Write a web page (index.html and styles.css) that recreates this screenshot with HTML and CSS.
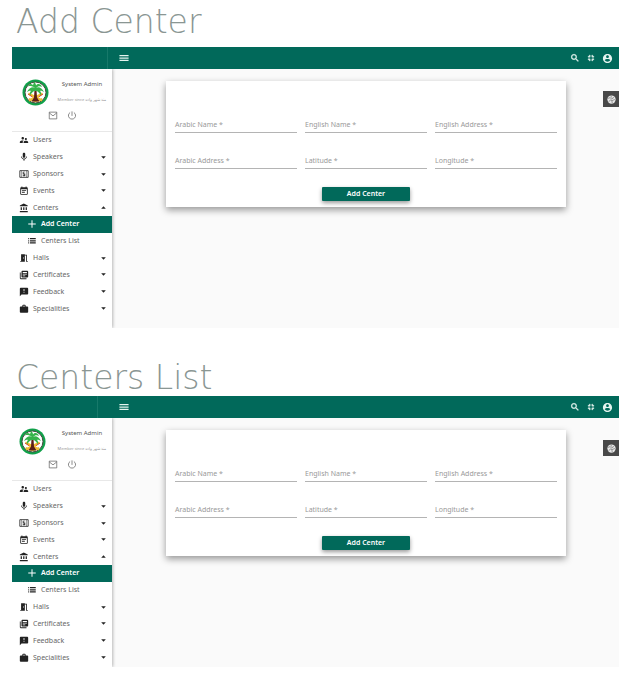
FILE: index.html
```
<!DOCTYPE html>
<html lang="en">
<head>
<meta charset="utf-8">
<title>Centers</title>
<link rel="stylesheet" href="styles.css">
</head>
<body>
<svg class="defs" aria-hidden="true">
  <symbol id="menu" viewBox="0 0 24 24"><path d="M1 19h22v-3H1v3zm0-5.500h22v-3H1v3zM1 5v3h22V5H1z"/></symbol>
  <symbol id="search" viewBox="0 0 24 24"><path d="M15.5 14h-.79l-.28-.27A6.47 6.47 0 0 0 16 9.5 6.5 6.5 0 1 0 9.5 16c1.61 0 3.09-.59 4.23-1.57l.27.28v.79l5 4.99L20.49 19l-4.99-5zm-6 0C7.01 14 5 11.99 5 9.5S7.01 5 9.5 5 14 7.01 14 9.5 11.99 14 9.5 14z" stroke="currentColor"/></symbol>
  <symbol id="shrink" viewBox="0 0 24 24"><path d="M5 16h3v3h2v-5H5v2zm3-8H5v2h5V5H8v3zm6 11h2v-3h3v-2h-5v5zm2-11V5h-2v5h5V8h-3z" stroke="currentColor"/></symbol>
  <symbol id="account" viewBox="0 0 24 24"><path d="M12 2C6.480 2 2 6.480 2 12s4.480 10 10 10 10-4.480 10-10S17.520 2 12 2zm0 3c1.660 0 3 1.340 3 3s-1.340 3-3 3-3-1.340-3-3 1.340-3 3-3zm0 14.200c-2.500 0-4.710-1.280-6-3.220.03-1.990 4-3.080 6-3.080 1.990 0 5.970 1.090 6 3.080-1.290 1.940-3.500 3.220-6 3.220z"/></symbol>
  <symbol id="mail" viewBox="0 0 24 24"><path d="M2 3h20v18H2zM2 5l10 8 10-8" fill="none" stroke="currentColor" stroke-width="2"/></symbol>
  <symbol id="power" viewBox="0 0 24 24"><path d="M12 1v12M7 4a9.500 9.500 0 1 0 10 0" fill="none" stroke="currentColor" stroke-width="2"/></symbol>
  <symbol id="users" viewBox="0 0 24 24"><path d="M16.500 12c1.380 0 2.490-1.120 2.490-2.500S17.880 7 16.500 7 14 8.120 14 9.500s1.120 2.500 2.500 2.500zM9 11c1.660 0 2.990-1.340 2.990-3S10.660 5 9 5 6 6.340 6 8s1.340 3 3 3zm7.500 3c-1.830 0-5.500.92-5.500 2.750V19h11v-2.250c0-1.830-3.670-2.750-5.500-2.750zM9 13c-2.330 0-7 1.170-7 3.500V19h7v-2.250c0-.85.33-2.340 2.370-3.470C10.500 13.100 9.660 13 9 13z"/></symbol>
  <symbol id="mic" viewBox="0 0 24 24"><path d="M12 14c1.660 0 2.990-1.340 2.990-3L15 5c0-1.660-1.340-3-3-3S9 3.340 9 5v6c0 1.660 1.340 3 3 3zm5.300-3c0 3-2.540 5.100-5.300 5.100S6.700 14 6.700 11H5c0 3.410 2.720 6.230 6 6.720V21h2v-3.280c3.280-.48 6-3.300 6-6.720h-1.700z"/></symbol>
  <symbol id="money" viewBox="0 0 24 24"><path d="M2 4h20v16H2z" fill="none" stroke="currentColor" stroke-width="2"/><path d="M5 4h1v16H5zM18 4h1v16h-1zM15 8h-4v3h4v6h-2v1h-2v-1H9v-2h4v-2H9V7h2V6h2v1h2z"/></symbol>
  <symbol id="event" viewBox="0 0 24 24"><path d="M17 10H7v2h10v-2zm2-7h-1V1h-2v2H8V1H6v2H5c-1.110 0-1.990.9-1.990 2L3 19c0 1.100.89 2 2 2h14c1.100 0 2-.9 2-2V5c0-1.100-.9-2-2-2zm0 16H5V8h14v11zm-5-5H7v2h7v-2z"/></symbol>
  <symbol id="bank" viewBox="0 0 24 24"><path d="M4 10v7h3v-7H4zm6 0v7h3v-7h-3zM2 22h19v-3H2v3zm14-12v7h3v-7h-3zM11.500 1L2 6v2h19V6l-9.500-5z"/></symbol>
  <symbol id="plus" viewBox="0 0 24 24"><path d="M21 13.200h-7.800V21h-2.400v-7.800H3v-2.400h7.800V3h2.400v7.800H21v2.400z"/></symbol>
  <symbol id="list" viewBox="0 0 24 24"><path d="M3 5h2v3H3zm0 5h2v3H3zm0 5h2v3H3zM7 5h14v3H7zm0 5h14v3H7zm0 5h14v3H7z"/></symbol>
  <symbol id="door" viewBox="0 0 24 24"><path d="M14 6v15H3v-2h2V3h9v1h5v15h2v2h-4V6h-3zm-4 5v2h2v-2h-2z"/></symbol>
  <symbol id="books" viewBox="0 0 24 24"><path d="M4 6H2v14c0 1.100.9 2 2 2h14v-2H4V6zm16-4H8c-1.100 0-2 .9-2 2v12c0 1.100.9 2 2 2h12c1.100 0 2-.9 2-2V4c0-1.100-.9-2-2-2zm-1 9H9V9h10v2zm-4 4H9v-2h6v2zm4-8H9V5h10v2z"/></symbol>
  <symbol id="feedback" viewBox="0 0 24 24"><path d="M20 2H4c-1.100 0-1.990.9-1.990 2L2 22l4-4h14c1.100 0 2-.9 2-2V4c0-1.100-.9-2-2-2zm-7 12h-2v-2h2v2zm0-4h-2V5h2v5z"/></symbol>
  <symbol id="work" viewBox="0 0 24 24"><path d="M20 6h-4V4c0-1.110-.89-2-2-2h-4c-1.110 0-2 .89-2 2v2H4c-1.110 0-2 .89-2 2v11c0 1.110.89 2 2 2h16c1.110 0 2-.89 2-2V8c0-1.110-.89-2-2-2zm-6 0h-4V4h4v2z"/></symbol>
  <symbol id="down" viewBox="0 0 24 24"><path d="M1 6h22L12 18z"/></symbol>
  <symbol id="up" viewBox="0 0 24 24"><path d="M1 18h22L12 6z"/></symbol>
  <symbol id="globe" viewBox="0 0 24 24"><circle cx="12" cy="12" r="11" fill="#e8e8e8"/><path d="M2 9l7-2 3 4 7-5M5 18l4-5 4 2 8-3M10 2l3 5M13 15l1 7" fill="none" stroke="#777" stroke-width="2"/></symbol>
  <symbol id="emblem" viewBox="0 0 54 54">
    <circle cx="27" cy="27" r="26" fill="#10a04a"/>
    <circle cx="27" cy="27" r="21" fill="#fff" stroke="#4a4a40" stroke-width="2"/>
    <path d="M13 29l27 14M41 29L14 43" stroke="#f2c230" stroke-width="4"/>
    <path d="M12 30l9 6M42 30l-9 6" stroke="#d8432e" stroke-width="2"/>
    <path d="M14 39q13 12 26 0" fill="none" stroke="#e9bd3c" stroke-width="3"/>
    <path d="M25 22h4l1 15 5 8H19l5-8z" fill="#5c1f17"/>
    <path d="M27 18C22 14 14 17 10 26c4-2 6-3 8-2-2 2-3 5-2 9 3-5 6-8 9-9h4c3 1 6 4 9 9 1-4 0-7-2-9 2-1 4 0 8 2-4-9-12-12-16-8 4-4 8-4 12-2-2-6-8-8-12-3 0-4-2-6-5-7 1 2 0 4-1 6-4-4-9-2-10 3 3-2 8-1 15 3z" fill="#35b34a"/>
  </symbol>
</svg>

<main>
  <section>
    <h1>Add Center</h1>
    <div class="app">
      <header class="topbar">
        <div class="brand"></div>
        <button class="icon-btn" aria-label="Menu"><svg><use href="#menu"/></svg></button>
        <div class="tools">
          <button class="icon-btn" aria-label="Search"><svg><use href="#search"/></svg></button>
          <button class="icon-btn" aria-label="Exit full screen"><svg><use href="#shrink"/></svg></button>
          <button class="icon-btn" aria-label="Account"><svg><use href="#account"/></svg></button>
        </div>
      </header>
      <div class="body">
        <aside class="sidebar">
          <div class="profile">
            <svg class="avatar"><use href="#emblem"/></svg>
            <div class="who">
              <strong>System Admin</strong>
              <small>Member since <bdi>منذ شهر واحد</bdi></small>
            </div>
            <div class="quick">
              <button class="icon-btn" aria-label="Messages"><svg><use href="#mail"/></svg></button>
              <button class="icon-btn" aria-label="Log out"><svg><use href="#power"/></svg></button>
            </div>
          </div>
          <nav class="menu">
            <a href="#"><svg><use href="#users"/></svg><span>Users</span></a>
            <a href="#"><svg><use href="#mic"/></svg><span>Speakers</span><svg class="caret"><use href="#down"/></svg></a>
            <a href="#"><svg><use href="#money"/></svg><span>Sponsors</span><svg class="caret"><use href="#down"/></svg></a>
            <a href="#"><svg><use href="#event"/></svg><span>Events</span><svg class="caret"><use href="#down"/></svg></a>
            <a href="#"><svg><use href="#bank"/></svg><span>Centers</span><svg class="caret"><use href="#up"/></svg></a>
            <a href="#" class="sub active"><svg><use href="#plus"/></svg><span>Add Center</span></a>
            <a href="#" class="sub"><svg><use href="#list"/></svg><span>Centers List</span></a>
            <a href="#"><svg><use href="#door"/></svg><span>Halls</span><svg class="caret"><use href="#down"/></svg></a>
            <a href="#"><svg><use href="#books"/></svg><span>Certificates</span><svg class="caret"><use href="#down"/></svg></a>
            <a href="#"><svg><use href="#feedback"/></svg><span>Feedback</span><svg class="caret"><use href="#down"/></svg></a>
            <a href="#"><svg><use href="#work"/></svg><span>Specialities</span><svg class="caret"><use href="#down"/></svg></a>
          </nav>
        </aside>
        <div class="content">
          <form class="card">
            <div class="fields">
              <div class="field"><label for="a1">Arabic Name *</label><input id="a1" type="text"></div>
              <div class="field"><label for="a2">English Name *</label><input id="a2" type="text"></div>
              <div class="field"><label for="a3">English Address *</label><input id="a3" type="text"></div>
              <div class="field"><label for="a4">Arabic Address *</label><input id="a4" type="text"></div>
              <div class="field"><label for="a5">Latitude *</label><input id="a5" type="text"></div>
              <div class="field"><label for="a6">Longitude *</label><input id="a6" type="text"></div>
            </div>
            <button class="submit" type="button">Add Center</button>
          </form>
          <button class="settings" aria-label="Theme"><svg><use href="#globe"/></svg></button>
        </div>
      </div>
    </div>
  </section>

  <section class="compact">
    <h1>Centers List</h1>
    <div class="app">
      <header class="topbar">
        <div class="brand"></div>
        <button class="icon-btn" aria-label="Menu"><svg><use href="#menu"/></svg></button>
        <div class="tools">
          <button class="icon-btn" aria-label="Search"><svg><use href="#search"/></svg></button>
          <button class="icon-btn" aria-label="Exit full screen"><svg><use href="#shrink"/></svg></button>
          <button class="icon-btn" aria-label="Account"><svg><use href="#account"/></svg></button>
        </div>
      </header>
      <div class="body">
        <aside class="sidebar">
          <div class="profile">
            <svg class="avatar"><use href="#emblem"/></svg>
            <div class="who">
              <strong>System Admin</strong>
              <small>Member since <bdi>منذ شهر واحد</bdi></small>
            </div>
            <div class="quick">
              <button class="icon-btn" aria-label="Messages"><svg><use href="#mail"/></svg></button>
              <button class="icon-btn" aria-label="Log out"><svg><use href="#power"/></svg></button>
            </div>
          </div>
          <nav class="menu">
            <a href="#"><svg><use href="#users"/></svg><span>Users</span></a>
            <a href="#"><svg><use href="#mic"/></svg><span>Speakers</span><svg class="caret"><use href="#down"/></svg></a>
            <a href="#"><svg><use href="#money"/></svg><span>Sponsors</span><svg class="caret"><use href="#down"/></svg></a>
            <a href="#"><svg><use href="#event"/></svg><span>Events</span><svg class="caret"><use href="#down"/></svg></a>
            <a href="#"><svg><use href="#bank"/></svg><span>Centers</span><svg class="caret"><use href="#up"/></svg></a>
            <a href="#" class="sub active"><svg><use href="#plus"/></svg><span>Add Center</span></a>
            <a href="#" class="sub"><svg><use href="#list"/></svg><span>Centers List</span></a>
            <a href="#"><svg><use href="#door"/></svg><span>Halls</span><svg class="caret"><use href="#down"/></svg></a>
            <a href="#"><svg><use href="#books"/></svg><span>Certificates</span><svg class="caret"><use href="#down"/></svg></a>
            <a href="#"><svg><use href="#feedback"/></svg><span>Feedback</span><svg class="caret"><use href="#down"/></svg></a>
            <a href="#"><svg><use href="#work"/></svg><span>Specialities</span><svg class="caret"><use href="#down"/></svg></a>
          </nav>
        </aside>
        <div class="content">
          <form class="card">
            <div class="fields">
              <div class="field"><label for="b1">Arabic Name *</label><input id="b1" type="text"></div>
              <div class="field"><label for="b2">English Name *</label><input id="b2" type="text"></div>
              <div class="field"><label for="b3">English Address *</label><input id="b3" type="text"></div>
              <div class="field"><label for="b4">Arabic Address *</label><input id="b4" type="text"></div>
              <div class="field"><label for="b5">Latitude *</label><input id="b5" type="text"></div>
              <div class="field"><label for="b6">Longitude *</label><input id="b6" type="text"></div>
            </div>
            <button class="submit" type="button">Add Center</button>
          </form>
          <button class="settings" aria-label="Theme"><svg><use href="#globe"/></svg></button>
        </div>
      </div>
    </div>
  </section>
</main>
</body>
</html>
```

FILE: styles.css
```
* { box-sizing: border-box; }

body {
  margin: 0;
  background: #fff;
  color: #666;
  font: 7px/10px "Noto Sans", "Open Sans", sans-serif;
}

.defs { position: absolute; width: 0; height: 0; }
svg { display: block; fill: currentColor; flex: none; }
button { padding: 0; border: 0; background: none; color: inherit; font: inherit; }

main {
  display: grid;
  gap: 28px;
  padding: 0 18px 10px 12px;
}

h1 {
  margin: 0;
  padding: 4px 4px 7px;
  color: #8a9693;
  font: 200 33px/36px "DejaVu Sans", sans-serif;
}

.compact h1 { padding-bottom: 0; }

.topbar {
  display: flex;
  align-items: center;
  height: 22px;
  padding-right: 6px;
  background: #01695a;
  color: #e4f4ef;
}

.brand {
  width: 96px;
  height: 100%;
  margin-right: 11px;
  border-right: 1px solid #17796a;
}

.compact .brand { width: 86px; margin-right: 21px; }
.topbar svg { width: 10px; height: 10px; }
.topbar .tools button:last-child svg { width: 11px; height: 11px; }
.tools { display: flex; align-items: center; gap: 6px; margin-left: auto; }

.body { display: flex; }

.sidebar {
  position: relative;
  width: 100px;
  padding-bottom: 11px;
  background: #fff;
  box-shadow: 1px 0 3px #0004;
  clip-path: inset(0 -5px 0 0);
}

.compact .sidebar { padding-bottom: 1px; }

.profile {
  display: grid;
  grid-template-columns: 27px 1fr;
  grid-template-rows: 27px 18px;
  column-gap: 7px;
  height: 63px;
  padding: 10px 4px 0 10px;
  border-bottom: 1px solid #e8e8e8;
}

.compact .profile { padding-left: 7px; column-gap: 10px; }
.avatar { width: 27px; height: 27px; }
.who { display: grid; gap: 6px; align-content: start; justify-items: center; font-size: 6px; white-space: nowrap; }
.who strong { font-weight: 400; color: #555; }
.who small { font-size: 4px; color: #999; }
.quick { grid-column: 1 / 3; display: flex; gap: 9px; align-items: center; padding-left: 26px; }
.compact .quick { padding-left: 29px; }
.quick svg { width: 10px; height: 9px; }

.menu {
  display: grid;
  grid-auto-rows: 1fr;
  height: 185px;
}

.menu a {
  display: flex;
  align-items: center;
  gap: 4px;
  padding: 0 6px 0 7px;
  color: #666;
  text-decoration: none;
}

.menu svg { width: 10px; height: 10px; color: #222; }
.menu .caret { width: 5px; height: 5px; margin-left: auto; }
.menu .sub { padding-left: 15px; }
.menu .active { background: #01695a; color: #fff; font-weight: 600; }
.menu .active svg { color: #fff; }

.content {
  display: flex;
  flex: 1;
  align-items: flex-start;
  padding-top: 12px;
  padding-left: 54px;
  background: #fafafa;
}

.card {
  flex: 1;
  height: 126px;
  padding: 38px 9px 0;
  background: #fff;
  box-shadow: 0 3px 7px #0006;
}

.fields {
  display: grid;
  grid-template-columns: repeat(3, 1fr);
  gap: 22px 8px;
  margin-bottom: 18px;
}

.field { position: relative; }

.field label {
  position: absolute;
  top: 1px;
  left: 0;
  color: #999;
}

.field input {
  display: block;
  width: 100%;
  height: 14px;
  padding: 0;
  border: 0;
  border-bottom: 1px solid #b4b4b4;
  background: none;
  font: inherit;
  outline: 0;
}

.submit {
  display: block;
  width: 88px;
  height: 14px;
  margin: 0 auto;
  border-radius: 1px;
  background: #01695a;
  box-shadow: 0 2px 4px #0006;
  color: #fff;
  font-weight: 600;
}

.settings {
  display: grid;
  place-items: center;
  width: 16px;
  height: 16px;
  margin: 10px 0 0 37px;
  background: #484848;
}

.settings svg { width: 9px; height: 9px; }
```
